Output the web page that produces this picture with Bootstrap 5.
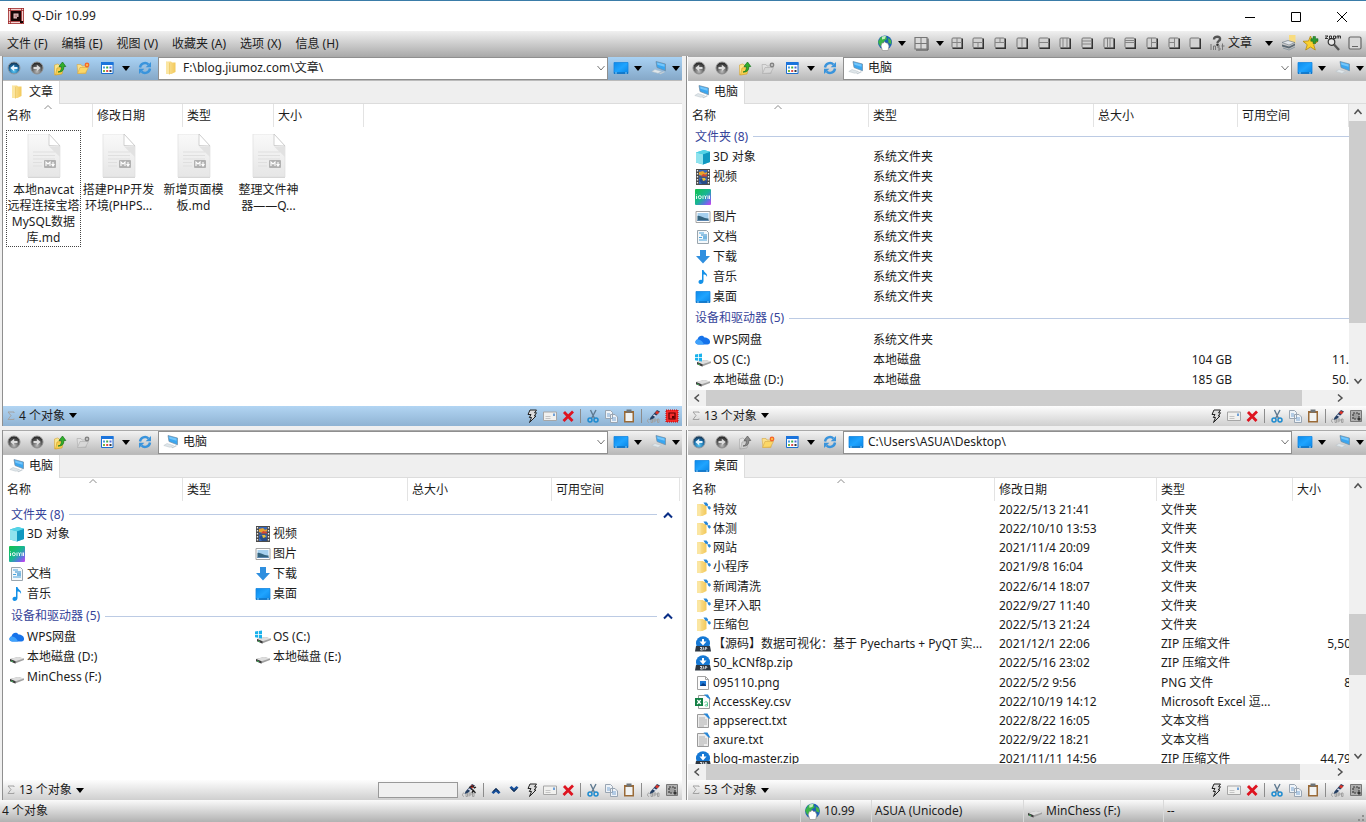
<!DOCTYPE html>
<html lang="zh-CN">
<head>
<meta charset="utf-8">
<meta name="viewport" content="width=device-width, initial-scale=1">
<title>Q-Dir 10.99</title>
<link href="https://cdn.jsdelivr.net/npm/bootstrap@5.3.0/dist/css/bootstrap.min.css" rel="stylesheet">
<style>
:root{--ink:#1c1c1c;--line:#8f8f8f;--face:#f0f0f0;--thumb:#cdcdcd}
body{font:12px/16px "Noto Sans","Noto Sans CJK SC",sans-serif;color:var(--ink);background:var(--face);overflow:hidden}
button,input{font:inherit;color:inherit;border:0;background:none;padding:0}
.titlebar{height:31px;background:#fff;border-top:1px solid #3a7ca8;padding-right:1px}
.titlebar button{width:46px;height:30px}
.menubar{height:25px;background:linear-gradient(#f0f0f0,#ababab)}
.menubar nav{gap:14px;padding:2px 0 0 7px}
.menubar nav a{color:var(--ink);text-decoration:none}
.layouts{width:260px}
.tool{height:22px;display:flex;align-items:center;justify-content:center;flex:none}
.w8{width:8px}.w18{width:18px}.w22{width:22px}.w23{width:23px}.w12{width:12px}.w26{width:26px}
.panes{display:grid;grid-template-columns:repeat(2,minmax(0,1fr));grid-template-rows:repeat(2,minmax(0,1fr));gap:4px;padding-left:2px}
.pane{background:#fff;border-left:1px solid var(--line)}
.pane:nth-child(even){padding-left:1px}
.bar{height:24px;background:linear-gradient(#f2f2f2,#b9b9b9);border-top:1px solid #a9a9a9}
.active .bar{background:linear-gradient(#a9d2f4,#85a8c8)}
.address{height:23px;background:#fff;border:1px solid var(--line)}
.address input{outline:0;min-width:0}
.drops{width:74px}
.tabs{height:24px;background:#efefef;border-bottom:1px solid #dcdcdc;border-top:1px solid #bbb}
.tabs button{height:23px;width:57px;background:#fff;border-right:1px solid #dcdcdc;margin-bottom:-1px}
.foot{height:20px;background:linear-gradient(#fdfdfd,#cfcfcf);padding-right:1px}
.active .foot{background:linear-gradient(#b2d5f3,#8fb3d3)}
.foot .tool{height:20px}
.split{width:1px;height:14px;margin:0 3px;background:#8c8c8c;flex:none}
.find{width:80px;height:16px;background:#f0f0f0;border:1px solid #999}
.heads{height:23px}
.col-head,.files th{height:23px;padding:1px 4px 0;border-right:1px solid #e3e3e3;font-weight:400;text-align:left;position:relative;flex:none}
.sort{position:absolute;top:0;left:50%;margin-left:-4px}
.files{table-layout:fixed;width:100%;border-collapse:separate;border-spacing:0}
.files td{padding:0 4px;height:20px;line-height:18px;white-space:nowrap;overflow:hidden}
.files td.num{text-align:right;padding:0}
.files td.num.inner{padding-right:6px}
.files td:first-child{padding:0 7px}
.files td.band{padding-right:0}
.dense{width:calc(100% + 2px)}
.dense td{height:19px}
.dense tr:nth-child(5n) td{height:20px}
.entry{display:flex;align-items:center;gap:2px;overflow:hidden;height:18px;white-space:nowrap}
.group{color:#36449a;gap:5px;height:20px;white-space:nowrap}
.group.tall{height:23px}
.group i{flex:1;height:1px;background:#bccbe4}
.tiles{display:grid;grid-template-columns:repeat(auto-fill,246px);grid-auto-rows:20px;padding-left:6px}
.bigs{padding:3px 0 0 3px}
.bigs button{width:75px;border:1px dotted transparent;padding-top:3px;white-space:nowrap}
.bigs button.on{border-color:#444}
.bigs svg{display:block;margin:0 auto 4px}
.vbar{width:17px;background:var(--face);flex:none}
.hbar{height:16px;background:var(--face);padding-right:17px}
.thumb{background:var(--thumb);flex-basis:0}
.vbar button{height:17px}.hbar button{width:18px}
.vbar svg,.hbar svg{display:block;margin:auto}
.statusbar{height:22px;background:linear-gradient(#fafafa,#b2b2b2)}
.cellbox{border-left:1px solid #d9d9d9;padding-left:3px;height:22px;gap:3px}
.mute{filter:grayscale(1)}
svg{flex:none}
</style>
</head>
<body class="vh-100 d-flex flex-column">

<svg width="0" height="0" class="position-absolute" aria-hidden="true">
<defs>
<radialGradient id="gb" cx=".5" cy=".75" r=".7"><stop offset="0" stop-color="#5cc8f4"/><stop offset=".6" stop-color="#1b6ca6"/><stop offset="1" stop-color="#16324c"/></radialGradient>
<radialGradient id="gg" cx=".5" cy=".8" r=".7"><stop offset="0" stop-color="#bbb"/><stop offset=".6" stop-color="#5e5e5e"/><stop offset="1" stop-color="#2b2b2b"/></radialGradient>
<linearGradient id="gd" x1="0" y1="0" x2="1" y2="1"><stop offset="0" stop-color="#0d8bea"/><stop offset=".5" stop-color="#1fa4ff"/><stop offset="1" stop-color="#0a86e6"/></linearGradient>
<linearGradient id="gf" x1="0" x2="1"><stop offset="0" stop-color="#fbe7a6"/><stop offset="1" stop-color="#f3c95a"/></linearGradient>
<linearGradient id="gp" y1="0" x2="0" y2="1"><stop offset="0" stop-color="#f9f9f9"/><stop offset="1" stop-color="#e6e6e6"/></linearGradient>
<linearGradient id="gi" x1="0" y1="0" x2="1" y2="1"><stop offset="0" stop-color="#13c24a"/><stop offset=".5" stop-color="#19b594"/><stop offset=".75" stop-color="#5a76e0"/><stop offset="1" stop-color="#d23cf0"/></linearGradient>
</defs>
<symbol id="down" viewBox="0 0 8 5"><path d="M0 0h8L4 5z" fill="#000"/></symbol>
<symbol id="back" viewBox="0 0 16 16"><circle cx="8" cy="8" r="6" fill="url(#gb)" stroke="#8d98a2" stroke-width="1"/><path d="M11.500 7H8.200V4.800L4.300 8l3.900 3.200V9h3.300z" fill="#e8f6ff"/></symbol>
<symbol id="backg" viewBox="0 0 16 16"><circle cx="8" cy="8" r="6" fill="url(#gg)" stroke="#8f8f8f"/><path d="M11.500 7H8.200V4.800L4.300 8l3.900 3.200V9h3.300z" fill="#ddd"/></symbol>
<symbol id="fwd" viewBox="0 0 16 16"><circle cx="8" cy="8" r="6" fill="url(#gg)" stroke="#8f8f8f"/><path d="M4.500 7h3.300V4.800L11.700 8l-3.900 3.200V9H4.500z" fill="#ddd"/></symbol>
<symbol id="up" viewBox="0 0 16 16"><path d="M2.500 5l3-1 2 1v9l-5 1z" fill="#fbe58a" stroke="#d3a53a" stroke-width=".6"/><path d="M3.500 15L5 8l6.500-1-1.500 7z" fill="#f7d04e" stroke="#cf9c2c" stroke-width=".6"/><path d="M6 12c3-.5 3.500-2.500 3.300-5.500H7L10.500 2l3.300 4.500h-2C12 10 10 12.500 6 12z" fill="#31b02c" stroke="#15721a" stroke-width=".7"/></symbol>
<symbol id="newf" viewBox="0 0 16 16"><path d="M2 4.500h4l1 1.500h4V13.500H3z" fill="#fbe08a" stroke="#d5a848" stroke-width=".6"/><path d="M2.500 13.500L5 7.500h8.500L10.500 13z" fill="#fcd766" stroke="#d5a848" stroke-width=".6"/><circle cx="12" cy="5" r="2.400" fill="#f6692b"/><circle cx="12" cy="5" r="1" fill="#ffd24a"/></symbol>
<symbol id="view" viewBox="0 0 16 16"><path fill="#fff" stroke="#1b6fd0" d="M2.500 2.500h11.500v11h-11.500z"/><path fill="#1b74dc" d="M2 2h12.500v3H2z"/><path fill="#4a9be0" d="M4 6.500h2v2H4z"/><path fill="#3cab4a" d="M7.200 6.500h2v2h-2z"/><path fill="#4a66d8" d="M10.500 6.500h2v2h-2z"/><path fill="#7cb83e" d="M4 10h2v2H4z"/><path fill="#e24a4a" d="M7.200 10h2v2h-2z"/><path fill="#35383f" d="M10.500 10h2v2h-2z"/></symbol>
<symbol id="refresh" viewBox="0 0 16 16"><path d="M3 7.500A5 5 0 0 1 11.500 4.500M13 8.500A5 5 0 0 1 4.500 11.500" fill="none" stroke="#3a94dc" stroke-width="2.400"/><path d="M14 2V7.200H8.700zM2 14V8.800h5.300z" fill="#3a94dc"/></symbol>
<symbol id="desk" viewBox="0 0 16 16"><path d="M1 2.500h14v11H1z" fill="url(#gd)"/><path d="M1 2.500h14v11H1z" fill="none" stroke="#1687df" stroke-width=".8"/><path d="M1 13h14" stroke="#0a62ad"/><path d="M2 13h2m8 0h2" stroke="#8ad0ff"/></symbol>
<symbol id="pc" viewBox="0 0 16 16"><path d="M5 1.500l9.500 2.500v6.800L6 7.500z" fill="#3aa6f0" stroke="#6f8ba2" stroke-width=".7"/><path d="M6 2.600l7.500 2v2.200L6.500 4.800z" fill="#74c6fb"/><path d="M4 9.500l6.500 2-3.500 1.800L.800 11.500z" fill="#dfe6ea" stroke="#b8c2c8" stroke-width=".5"/><path d="M8 13.500l5-2.300 1 .8-4.500 2.300z" fill="#c4cdd3"/></symbol>
<symbol id="folder" viewBox="0 0 16 16"><path d="M3 1.500h5l1 1h3.500V12l-4 2H3z" fill="url(#gf)"/><path d="M3 1.500l3.500 1.500v11.500L3 13z" fill="#fbe6a2"/><path d="M6.500 3v11.500" stroke="#e7bf57" stroke-width=".6"/></symbol>
<symbol id="folders" viewBox="0 0 16 16"><path d="M2 2h6l1 1h2.500V12l-4 2H2z" fill="url(#gf)"/><path d="M2 2l3.500 1.500v11L2 13z" fill="#fbe6a2"/><path d="M8.500.500h3l1.700 2-.7 1.800-2.200-.8z" fill="#2787d8"/><path d="M12.300 4.300h2.700l1 2-1.700 1.500-1.300-1.500z" fill="#2787d8"/></symbol>
<symbol id="cube" viewBox="0 0 16 16"><path d="M1 3.500L9 1l6 1.800V13l-7 2.500-7-2z" fill="#35c3dc"/><path d="M1 3.500l7 1.700v10.300l-7-2z" fill="#8fe3ee"/><path d="M8 5.200l7-2.400V13l-7 2.500z" fill="#1098c0"/><path d="M1 3.500L9 1l6 1.800-7 2.400z" fill="#55d3e6"/></symbol>
<symbol id="video" viewBox="0 0 16 16"><path d="M1 0h14v16H1z" fill="#4b4b4b"/><path d="M4 1h8v6.500H4zM4 8.500h8V15H4z" fill="#3767bb"/><path d="M4 3l4-1 2 2 2-1v2l-4 2-4-1z" fill="#e7a22d"/><path d="M8 5l4 1v1.500H6z" fill="#d64532"/><path d="M4 11l4-2 4 3v3H7z" fill="#274c87"/><path d="M7 9h3l1 2-3 1z" fill="#e5bd3b"/><path d="M2.500 1v14M13.500 1v14" stroke="#eee" stroke-width="1.300" stroke-dasharray="1.500 1.500"/></symbol>
<symbol id="iqy" viewBox="0 0 16 16"><rect width="16" height="16" rx="1" fill="url(#gi)"/><g fill="none" stroke="#fff" stroke-width=".9"><path d="M1.500 7v3M1.500 5.500v.7M8 6.500v3.500M9.500 6.500l1 1.500 1-1.500M10.500 8v2M13 6.500v3.500M14.500 6.500v3.500"/><circle cx="4.800" cy="8.200" r="1.500"/></g></symbol>
<symbol id="pic" viewBox="0 0 16 16"><path d="M1 2.500h14v11H1z" fill="#fff" stroke="#a3a3a3"/><path d="M2.500 4h11v8h-11z" fill="#a6d0ee"/><path d="M2.500 7c3-1 6 3 11 2.500V12h-11z" fill="#35647e"/><path d="M2.500 11h11v1h-11z" fill="#5b86b0"/></symbol>
<symbol id="doc" viewBox="0 0 16 16"><path d="M2.500 1.500h9l2 2v11h-11z" fill="#f4f8fb" stroke="#9aa5ad"/><path d="M4 4h5M4 8.500h3M4 11h8" stroke="#4aa3dc"/><path d="M6 6h6M9 8h3" stroke="#2b88c8"/><path d="M8 7h4v3H8z" fill="#78b7e0"/></symbol>
<symbol id="dl" viewBox="0 0 16 16"><path d="M5 1h6v6h4l-7 7.500L1 7h4z" fill="#2f8fdf"/></symbol>
<symbol id="music" viewBox="0 0 16 16"><path d="M7 1h1.500c.5 3 4.500 3 3.500 7-.5-2-2-2.500-3.500-2.500V12c0 3.500-5 3.800-5 1 0-2 2-2.500 3.500-2z" fill="#1491e8"/></symbol>
<symbol id="cloud" viewBox="0 0 16 16"><path d="M3.500 12.500C-.5 12.500-.3 8 2.500 7.500 3 3.500 8 2.500 9.500 5.500c3 0 6 2 5.500 5-.3 1.300-1 2-2.500 2z" fill="#1673ea"/><path d="M3.500 12.500C-.5 12.500-.3 8 2.500 7.500c3-.5 5 2 6.500 5z" fill="#3fa2fb"/></symbol>
<symbol id="drive" viewBox="0 0 16 16"><path d="M1 10l8-2 6 1.500v1.500l-9 3.500L1 12z" fill="#a0a0a0"/><path d="M1 10l8-2 6 1.500-8.500 2.700z" fill="#dedede"/><path d="M1 10l5.500 2.200v2.300L1 12.200z" fill="#3d3d3d"/><path d="M2.200 12l1.500.5" stroke="#3fd35d"/></symbol>
<symbol id="os" viewBox="0 0 16 16"><use href="#drive" x="1"/><path d="M0 2.500l3-.5v3H0zM3.800 1.900L7 1.400V5H3.800zM0 5.800h3v3l-3-.5zM3.800 5.800H7v3.600l-3.200-.5z" fill="#1ab2ec"/></symbol>
<symbol id="zip" viewBox="0 0 16 16"><circle cx="8" cy="7.200" r="7" fill="#1578d4"/><path d="M7 3h2v2.500h2.500L8 9.500 4.500 5.500H7z" fill="#fff"/><path d="M1 10h14l1 5.500H0z" fill="#2d3640"/><path d="M5 11.500h2l-1.500 2.500h2M8.500 11.300l-.4 2.900M10 14.200l.4-2.700c2-.2 2 1.500 0 1.500" fill="none" stroke="#fff" stroke-width=".8"/></symbol>
<symbol id="png" viewBox="0 0 16 16"><path d="M2.500 1.500h8l3 3v10h-11z" fill="#fdfdfd" stroke="#a2a2a2"/><path d="M10.500 1.500v3h3" fill="none" stroke="#a2a2a2"/><path d="M5 6h6v5H5z" fill="#1d78d4"/><path d="M5 11l3-3 3 2v1z" fill="#0b3f86"/></symbol>
<symbol id="csv" viewBox="0 0 16 16"><path d="M3.500 1.500h9l2 2v11h-11z" fill="#fdfdfd" stroke="#9a9a9a"/><path d="M0 4h8v8H0z" fill="#128045"/><path d="M2.300 6l3.500 4M5.700 6l-3.500 4" stroke="#fff" stroke-width="1.200"/><path d="M9.500 8.500c1-1 3-1 3 .5v3c-3 .6-3.500-1.500 0-1.700" fill="none" stroke="#59c994"/><path d="M9 .500h4l2.700 5-3-1.500z" fill="#2787d8"/></symbol>
<symbol id="txt" viewBox="0 0 16 16"><path d="M2.500 1.500h9l2 2v11h-11z" fill="#ececec" stroke="#9a9a9a"/><path d="M4 5h6M4 7h8M4 9h8M4 11h8M4 13h5" stroke="#a9a9a9" stroke-width=".9"/><path d="M8.500.500h4l3 5.500-2.500-1z" fill="#2787d8"/></symbol>
<symbol id="md" viewBox="0 0 34 44"><path d="M1 1h22l10 12v31H1z" fill="#d2d2d2"/><path d="M1 0h21l11 12v31H1z" fill="url(#gp)" stroke="#dedede" stroke-width=".7"/><path d="M22 0l11 12-11-.5z" fill="#fff" stroke="#c6c6c6" stroke-width=".8"/><path d="M22 12.500L33 23V13z" fill="#e2e2e2"/><path d="M6 18h22M6 21.500h22M6 25h22M6 28.500h9M6 32h9" stroke="#dfdfdf"/><rect x="17" y="26" width="12" height="8" rx="1" fill="#b1b1b1"/><path d="M19 32v-4l2 2 2-2v4M26 28v3m-1.500-1L26 32l1.500-2" fill="none" stroke="#fff" stroke-width="1.100"/></symbol>
<symbol id="bolt" viewBox="0 0 16 16"><path d="M6 2h6.500l-2 2.800h2L10.300 8H12l-6.500 6.500L7.500 9.500H5.300L7 6.500H4z" fill="#dcdcdc" stroke="#222" stroke-width="1"/></symbol>
<symbol id="mail" viewBox="0 0 16 16"><path d="M1.500 4h13v8.500h-13z" fill="#f1f1ef" stroke="#a6a6a6"/><path d="M11 5.500h2V8h-2z" fill="#6fa1d8"/><path d="M3.500 8.500h5M3.500 10.500h5" stroke="#c4c4c4"/></symbol>
<symbol id="del" viewBox="0 0 16 16"><path d="M4 4l8.500 9M13 3.500L3.500 13" stroke="#de1420" stroke-width="2.800"/></symbol>
<symbol id="cut" viewBox="0 0 16 16"><path d="M5.500 2L9.500 10.500M11 2L6.500 10.500" stroke="#5f7a91" stroke-width="1.400"/><circle cx="5" cy="12" r="2" fill="none" stroke="#1d8bd0" stroke-width="1.500"/><circle cx="11" cy="12" r="2" fill="none" stroke="#1d8bd0" stroke-width="1.500"/></symbol>
<symbol id="copy" viewBox="0 0 16 16"><g fill="#eef3f8" stroke="#99a5b2"><path d="M2.500 2.500h5l2 2v6h-7zM7.500 6.500h4.500l2.500 2.500v5.500h-7z"/><path d="M4 6h3M4 8h3M9 10h4M9 12h4" stroke="#7aa5d2"/></g></symbol>
<symbol id="paste" viewBox="0 0 16 16"><path d="M3 3h10v11.500H3z" fill="#9a6a37"/><path d="M4.500 5h7v8h-7z" fill="#f1f3f3"/><path d="M5.500 1.500h5v3h-5z" fill="#6e7478"/></symbol>
<symbol id="pen" viewBox="0 0 16 16"><g fill="none" stroke="#a0a0a0"><path d="M3 11c-2 0-2 3.500 0 3.500M5 11v3.500h1.500v-3.500zM8 14.500V11h2v2H8M11.500 11v3.500h1.500v-3.500z"/></g><path d="M4.500 9.500L11 2l3 1.500L7.500 10.500 3.500 12z" fill="#243f63"/><path d="M9 5l1.800-2.200 2.500 1.500-1.900 2.200z" fill="#d9352a"/><path d="M7 7.500l1-1.200 2.400 1.400-1 1.200z" fill="#dde"/></symbol>
<symbol id="find" viewBox="0 0 16 16"><use href="#pen"/><path d="M8 5.500l4-1.500 1.500 2 1.500-1M10 7l2 1-1 3M12 8l2.500 3" stroke="#222" stroke-width="1.200" fill="none"/></symbol>
<symbol id="lock" viewBox="0 0 16 16"><path d="M2.500 2.500h11v11h-11z" fill="#b0b0b0" stroke="#777"/><path d="M5 5h6v6H5z" fill="#9d9d9d" stroke="#3d3d3d" stroke-width="1.200" stroke-dasharray="2 1"/><path d="M10 10h2.500v2.500H10z" fill="#333"/></symbol>
<symbol id="lockr" viewBox="0 0 16 16"><path d="M2 2h12v12H2z" fill="#f42a2a"/><path d="M2 2h12v12H2z" fill="none" stroke="#c40000" stroke-dasharray="1 1"/><path d="M5 5h6v6H5z" fill="#f42a2a" stroke="#5b0000" stroke-width="1.200"/><path d="M8 8h2.500v2.500H8z" fill="#5b0000"/></symbol>
<symbol id="cu" viewBox="0 0 16 16"><path d="M3.500 10.500L8 6l4.500 4.500-2 1.500L8 9.800 5.500 12z" fill="#17509c"/><path d="M5 9.500l3-3 3 3" fill="none" stroke="#0c1a2c"/></symbol>
<symbol id="globe" viewBox="0 0 16 16"><circle cx="8" cy="7.500" r="7" fill="#1d62b5"/><path d="M4 2l5-1 1 3-3 2-1 4-3 1-2-4z" fill="#3bb54a"/><path d="M5 1.500l4-.7-1 3-3 .7z" fill="#c6ecc0"/><path d="M11 3l3 2 .5 4-3-1z" fill="#43b649"/><path d="M5.500 15.500L4 11l1-3h1.500l1-1.500L9 8h1.500l1.500 3-1 4.500z" fill="#fff" stroke="#888" stroke-width=".6"/></symbol>
<symbol id="quad" viewBox="0 0 16 16"><path d="M3 15h12V3.500" fill="none" stroke="#444"/><path d="M2 2.500h12v11.500H2z" fill="#d9d9d9" stroke="#777" stroke-width="1.200"/><path d="M8 3v11M2 8.500h12" stroke="#777"/></symbol>
<symbol id="qdir" viewBox="0 0 16 16"><path d="M0 0h16v16H0z" fill="#f3d3d3"/><path d="M.5 0v16M2.500 0v16M13.500 0v16M15.500 0v16M0 .5h16M0 2.500h16M0 13.500h16M0 15.500h16" stroke="#9d2a2a" stroke-width=".8"/><path d="M4.200 4.200h7.600v7.600H4.200z" fill="#e6c8c8" stroke="#160505" stroke-width="2.600"/><path d="M6.500 6.500h3v3h-3z" fill="#b88"/><path d="M9 9h3v3H9zM12 13h3v2h-3z" fill="#160505"/></symbol>
<symbol id="inst" viewBox="0 0 16 16"><path d="M5 4.500c0-4 7-3.500 6 0-.5 1.500-2.500 1.500-2.500 3.500" fill="none" stroke="#555" stroke-width="2.400"/><circle cx="8.500" cy="9.800" r="1.300" fill="#333"/><path d="M2 9v6M4.500 15v-4h2V15M11 11H9v2h2V15H9M13.500 8.500v6.500M12.500 11h3" fill="none" stroke="#777"/></symbol>
<symbol id="stack" viewBox="0 0 16 16"><path d="M8 0h6.500v8H8z" fill="#f8dc80"/><path d="M1 7.500l6-2 7 2-6 2.500z" fill="#e2e6ea" stroke="#66727c" stroke-width=".6"/><path d="M1 9.500l7 2 6-3v2l-6 3-7-2z" fill="#5c6973"/><path d="M2 13l6 2 6-3" stroke="#8b98a2" fill="none"/></symbol>
<symbol id="star" viewBox="0 0 16 16"><path d="M7.500 1l2 5 5.500.3-4.300 3.400 1.600 5.300-4.800-3-4.800 3 1.500-5.300L0 6.300 5.500 6z" fill="#fbd02c" stroke="#b48a12" stroke-width=".8"/><path d="M10 1.500h2.500v2.200H15v2.600h-2.500V8.500H10V6.300H7.800V3.700H10z" fill="#2b9a34" stroke="#17631d" stroke-width=".5"/></symbol>
<symbol id="lens" viewBox="0 0 16 16"><circle cx="6.500" cy="7" r="3.300" fill="#e9e9e9" stroke="#333" stroke-width="1.200"/><path d="M9 9.500l5 5.500" stroke="#555" stroke-width="2.400"/><path d="M0 1h3L0 3.500h3M4.500 1v2.500h2V1zM8.500 1v2.500h2V1zM12 3.500V1h3.500v2.500M13.700 1v2.500" fill="none" stroke="#222" stroke-width=".9"/></symbol>
<symbol id="mini" viewBox="0 0 16 16"><rect x="2" y="2" width="12" height="12" rx="1.500" fill="#d9d9d9" stroke="#666" stroke-width="1.200"/><path d="M5 11.500h6" stroke="#666"/></symbol>
</svg>

<header class="titlebar d-flex align-items-center">
  <svg class="ms-2" width="16" height="16"><use href="#qdir"/></svg>
  <span class="flex-fill ps-1 ms-1">Q-Dir 10.99</span>
  <button aria-label="最小化"><svg width="10" height="10"><path d="M0 5.500h10" stroke="#000"/></svg></button>
  <button aria-label="最大化"><svg width="10" height="10"><path d="M.500.500h9v9h-9z" fill="none" stroke="#000"/></svg></button>
  <button aria-label="关闭"><svg width="10" height="10"><path d="M0 0l10 10M10 0L0 10" stroke="#000"/></svg></button>
</header>

<div class="menubar d-flex align-items-center">
  <nav class="d-flex flex-fill" aria-label="菜单">
    <a href="#">文件 (F)</a><a href="#">编辑 (E)</a><a href="#">视图 (V)</a><a href="#">收藏夹 (A)</a><a href="#">选项 (X)</a><a href="#">信息 (H)</a>
  </nav>
  <button class="tool w22" aria-label="网络"><svg width="16" height="16"><use href="#globe"/></svg></button>
  <button class="tool w12" aria-label="网络选项"><svg width="8" height="5"><use href="#down"/></svg></button>
  <button class="tool w26" aria-label="四窗格"><svg width="16" height="16"><use href="#quad"/></svg></button>
  <button class="tool w12" aria-label="布局选项"><svg width="8" height="5"><use href="#down"/></svg></button>
  <div class="layouts d-flex" id="layouts"></div>
  <button class="tool w22" aria-label="帮助"><svg width="16" height="16"><use href="#inst"/></svg></button>
  <button class="tool">文章</button>
  <button class="tool w26 ps-2" aria-label="选择目录"><svg width="8" height="5"><use href="#down"/></svg></button>
  <button class="tool w22" aria-label="堆栈"><svg width="16" height="16"><use href="#stack"/></svg></button>
  <button class="tool w22" aria-label="收藏"><svg width="16" height="16"><use href="#star"/></svg></button>
  <button class="tool w22" aria-label="放大"><svg width="16" height="16"><use href="#lens"/></svg></button>
  <button class="tool w22" aria-label="托盘"><svg width="16" height="16"><use href="#mini"/></svg></button>
</div>

<main class="panes flex-fill" id="panes" style="min-height:0"></main>

<footer class="statusbar d-flex align-items-center">
  <span class="flex-fill" style="padding-left:2px">4 个对象</span>
  <span class="cellbox d-flex align-items-center" style="width:71px"><svg width="17" height="17"><use href="#globe"/></svg>10.99</span>
  <span class="cellbox d-flex align-items-center" style="width:152px">ASUA (Unicode)</span>
  <span class="cellbox d-flex align-items-center" style="width:140px"><svg width="16" height="16"><use href="#drive"/></svg>MinChess (F:)</span>
  <span class="cellbox d-flex align-items-center justify-content-between" style="width:203px">--<svg class="align-self-end" width="12" height="12"><path d="M8 10h2M8 6h2M4 10h2" stroke="#8f8f8f" stroke-width="2"/></svg></span>
</footer>

<script src="https://cdn.jsdelivr.net/npm/bootstrap@5.3.0/dist/js/bootstrap.bundle.min.js"></script>
<script>
const icon = (id, cls = '') => `<svg class="${cls}" width="16" height="16"><use href="#${id}"/></svg>`;
const arrow = '<svg width="8" height="5"><use href="#down"/></svg>';
const chev = (deg, c = '#505050', w = 1.5) => `<svg width="10" height="10" viewBox="0 0 10 10"><path transform="rotate(${deg} 5 5)" d="M1.500 3l3.500 4 3.500-4" fill="none" stroke="${c}" stroke-width="${w}"/></svg>`;
const tool = (label, id, w, cls) => `<button class="tool ${w}" aria-label="${label}">${icon(id, cls)}</button>`;
const drop = (label, cls = 'w12') => `<button class="tool ${cls}" aria-label="${label}">${arrow}</button>`;
const sort = '<svg class="sort" width="8" height="6"><path d="M.500 5L4 1.500 7.500 5" fill="none" stroke="#8a8a8a"/></svg>';

// Pane layout buttons: the dividing lines inside each little frame
const layouts = ['M7 2v9M2 6.500h10','M2 6.500h10M7 7v4','M2 6.500h10M7 2v5','M7 2v9','M2 6.500h10','M5 2v9M9 2v9','M2 5h10M2 8h10','M5.500 2v9M8 2v9','M2 4.500h10M2 6.500h10','M6.500 2v9M7 6.500h5','M7.500 2v9M2 6.500h5',''];
document.getElementById('layouts').innerHTML = layouts.map((d, i) => `<button class="tool flex-fill" aria-label="布局 ${i + 1}"><svg width="14" height="14"><path d="M2.500 12h9.500V2.500" fill="none" stroke="#333" stroke-width="2"/><rect x="2" y="2" width="9.500" height="9.500" rx="1" fill="#d2d2d2" stroke="#777"/><path d="${d}" stroke="#858585" fill="none"/></svg></button>`).join('');

const group = (name, tall, collapse) => `<div class="group d-flex align-items-center ${tall ? 'tall' : ''}"><span>${name}</span><i></i>${collapse ? '<svg class="me-1" width="12" height="8"><path d="M2 6.500L6 2.500l4 4" fill="none" stroke="#0a2e86" stroke-width="2"/></svg>' : ''}</div>`;
const entry = ([id, name]) => `<div class="entry">${icon(id)}<span>${name}</span></div>`;
const heads = (cols) => `<div class="heads d-flex">${cols.map(([n, w], i) => `<button class="col-head" style="width:${w}px">${n}${i ? '' : sort}</button>`).join('')}</div>`;
const thead = (cols) => `<colgroup>${cols.map(([, w]) => `<col${w ? ` style="width:${w}px"` : ''}>`).join('')}</colgroup><thead><tr>${cols.map(([n], i) => `<th scope="col">${n}${i ? '' : sort}</th>`).join('')}</tr></thead>`;
const scrolled = (table, v, h) => `
  <div class="d-flex flex-fill" style="min-height:0"><div class="flex-fill overflow-hidden">${table}</div>
    <div class="vbar d-flex flex-column"><button aria-label="向上">${chev(180)}</button><div style="flex:${v[0]} 0 0"></div><div class="thumb" style="flex-grow:${v[1]}"></div><div style="flex:${v[2]} 0 0"></div><button aria-label="向下">${chev(0)}</button></div></div>
  <div class="hbar d-flex"><button aria-label="向左">${chev(90)}</button><div class="thumb" style="flex-grow:${h[0]}"></div><div style="flex:${h[1]} 0 0"></div><button aria-label="向右">${chev(-90)}</button></div>`;

const mdFiles = ['本地navcat<br>远程连接宝塔<br>MySQL数据<br>库.md','搭建PHP开发<br>环境(PHPS...','新增页面模<br>板.md','整理文件神<br>器——Q...'];
const sys = [['cube','3D 对象'],['video','视频'],['iqy',''],['pic','图片'],['doc','文档'],['dl','下载'],['music','音乐'],['desk','桌面']];
const drives = [['cloud','WPS网盘'],['os','OS (C:)'],['drive','本地磁盘 (D:)'],['drive','本地磁盘 (E:)'],['drive','MinChess (F:)']];
const driveInfo = [['系统文件夹','',''],['本地磁盘','104 GB','11.'],['本地磁盘','185 GB','50.']];
const files = [
 ['folders','特效','2022/5/13 21:41','文件夹',''],['folders','体测','2022/10/10 13:53','文件夹',''],['folders','网站','2021/11/4 20:09','文件夹',''],
 ['folders','小程序','2021/9/8 16:04','文件夹',''],['folders','新闻清洗','2022/6/14 18:07','文件夹',''],['folders','星环入职','2022/9/27 11:40','文件夹',''],
 ['folders','压缩包','2022/5/13 21:24','文件夹',''],['zip','【源码】数据可视化：基于 Pyecharts + PyQT 实...','2021/12/1 22:06','ZIP 压缩文件','5,50'],
 ['zip','50_kCNf8p.zip','2022/5/16 23:02','ZIP 压缩文件',''],['png','095110.png','2022/5/2 9:56','PNG 文件','8'],
 ['csv','AccessKey.csv','2022/10/19 14:12','Microsoft Excel 逗...',''],['txt','appserect.txt','2022/8/22 16:05','文本文档',''],
 ['txt','axure.txt','2022/9/22 18:21','文本文档',''],['zip','blog-master.zip','2021/11/11 14:56','ZIP 压缩文件','44,79']];

const sysRow = (e, t, a, b) => `<tr><td>${entry(e)}</td><td>${t}</td><td class="num inner">${a}</td><td class="num">${b}</td></tr>`;
const groupRow = (name, tall) => `<tr><td class="band" colspan="4" style="height:${tall ? 23 : 20}px">${group(name, tall)}</td></tr>`;

const panes = [
 {active:1, nav:'back', upCls:'', newCls:'', ic:'folder', path:'F:\\blog.jiumoz.com\\文章\\', tab:'文章', count:4,
  body: heads([['名称',90],['修改日期',90],['类型',91],['大小',90]]) + `<div class="bigs d-flex align-items-start">${mdFiles.map((f, i) => `<button class="${i ? '' : 'on'}"><svg width="34" height="44"><use href="#md"/></svg>${f}</button>`).join('')}</div>`},
 {nav:'backg', upCls:'', newCls:'mute', ic:'pc', path:'电脑', tab:'电脑', count:13,
  body: scrolled(`<table class="files">${thead([['名称',181],['类型',225],['总大小',144],['可用空间',0]])}<tbody>${groupRow('文件夹 (8)')}${sys.map(e => sysRow(e, '系统文件夹', '', '')).join('')}${groupRow('设备和驱动器 (5)', 1)}${driveInfo.map((d, i) => sysRow(drives[i], ...d)).join('')}</tbody></table>`, [0,202,50], [597,29])},
 {nav:'backg', upCls:'', newCls:'mute', ic:'pc', path:'电脑', tab:'电脑', count:13, find:1,
  body: heads([['名称',180],['类型',225],['总大小',144],['可用空间',128]]) + `<div class="ps-2 pe-1 pt-1">${group('文件夹 (8)',0,1)}</div><div class="tiles">${sys.map(entry).join('')}</div><div class="ps-2 pe-1">${group('设备和驱动器 (5)',1,1)}</div><div class="tiles">${drives.map(entry).join('')}</div>`},
 {nav:'back', upCls:'mute', newCls:'', ic:'desk', path:'C:\\Users\\ASUA\\Desktop\\', tab:'桌面', count:53,
  body: scrolled(`<table class="files dense">${thead([['名称',307],['修改日期',162],['类型',136],['大小',0]])}<tbody>${files.map(f => `<tr><td>${entry(f)}</td><td>${f[2]}</td><td>${f[3]}</td><td class="num">${f[4]}</td></tr>`).join('')}</tbody></table>`, [119,61,72], [595,31])}
];

document.getElementById('panes').innerHTML = panes.map((p, n) => `
<section class="pane d-flex flex-column overflow-hidden ${p.active ? 'active' : ''}" aria-label="窗格 ${n + 1}">
  <div class="bar d-flex align-items-center">
    ${tool('后退', p.nav, 'w22')}${tool('前进', 'fwd', 'w23')}${tool('向上', 'up', 'w23', p.upCls)}${tool('新建文件夹', 'newf', 'w23', p.newCls)}
    ${tool('视图', 'view', 'w26')}${drop('视图选项')}${tool('刷新', 'refresh', 'w26')}
    <div class="address d-flex align-items-center flex-fill ps-1 gap-1">${icon(p.ic)}<input class="flex-fill" type="text" aria-label="地址" value="${p.path}"><button class="tool w12" aria-label="历史记录">${chev(0, '#777', 1)}</button></div>
    <div class="drops d-flex align-items-center">${tool('桌面', 'desk', 'w26')}${drop('桌面选项', 'w8 me-auto')}${tool('电脑', 'pc', 'w22')}${drop('电脑选项')}</div>
  </div>
  <div class="tabs d-flex"><button class="d-flex align-items-center justify-content-center gap-1">${icon(p.ic)}${p.tab}</button></div>
  <div class="flex-fill d-flex flex-column overflow-hidden" style="min-height:0">${p.body}</div>
  <div class="foot d-flex align-items-center">
    <svg class="ms-1" width="8" height="10"><path d="M7 2V1H1l3 3.500L1 8.500h6v-1" fill="none" stroke="#a2a2a2"/></svg>
    <button class="tool gap-1 ps-1 me-auto"><span>${p.count} 个对象</span>${arrow}</button>
    ${p.find ? `<input class="find" type="text" aria-label="查找">${tool('查找', 'find', 'w22')}<span class="split"></span>${tool('上一个', 'cu', 'w18')}<button class="tool w18" aria-label="下一个"><svg width="16" height="16" viewBox="0 0 16 16"><use href="#cu" transform="rotate(180 8 8)"/></svg></button>` : ''}
    ${tool('闪电', 'bolt', 'w18')}${tool('邮件', 'mail', 'w18')}${tool('删除', 'del', 'w18')}<span class="split"></span>
    ${tool('剪切', 'cut', 'w18')}${tool('复制', 'copy', 'w18')}${tool('粘贴', 'paste', 'w18')}<span class="split"></span>
    ${tool('颜色', 'pen', 'w18')}${tool('锁定', p.active ? 'lockr' : 'lock', 'w18')}
  </div>
</section>`).join('');
</script>
</body>
</html>
